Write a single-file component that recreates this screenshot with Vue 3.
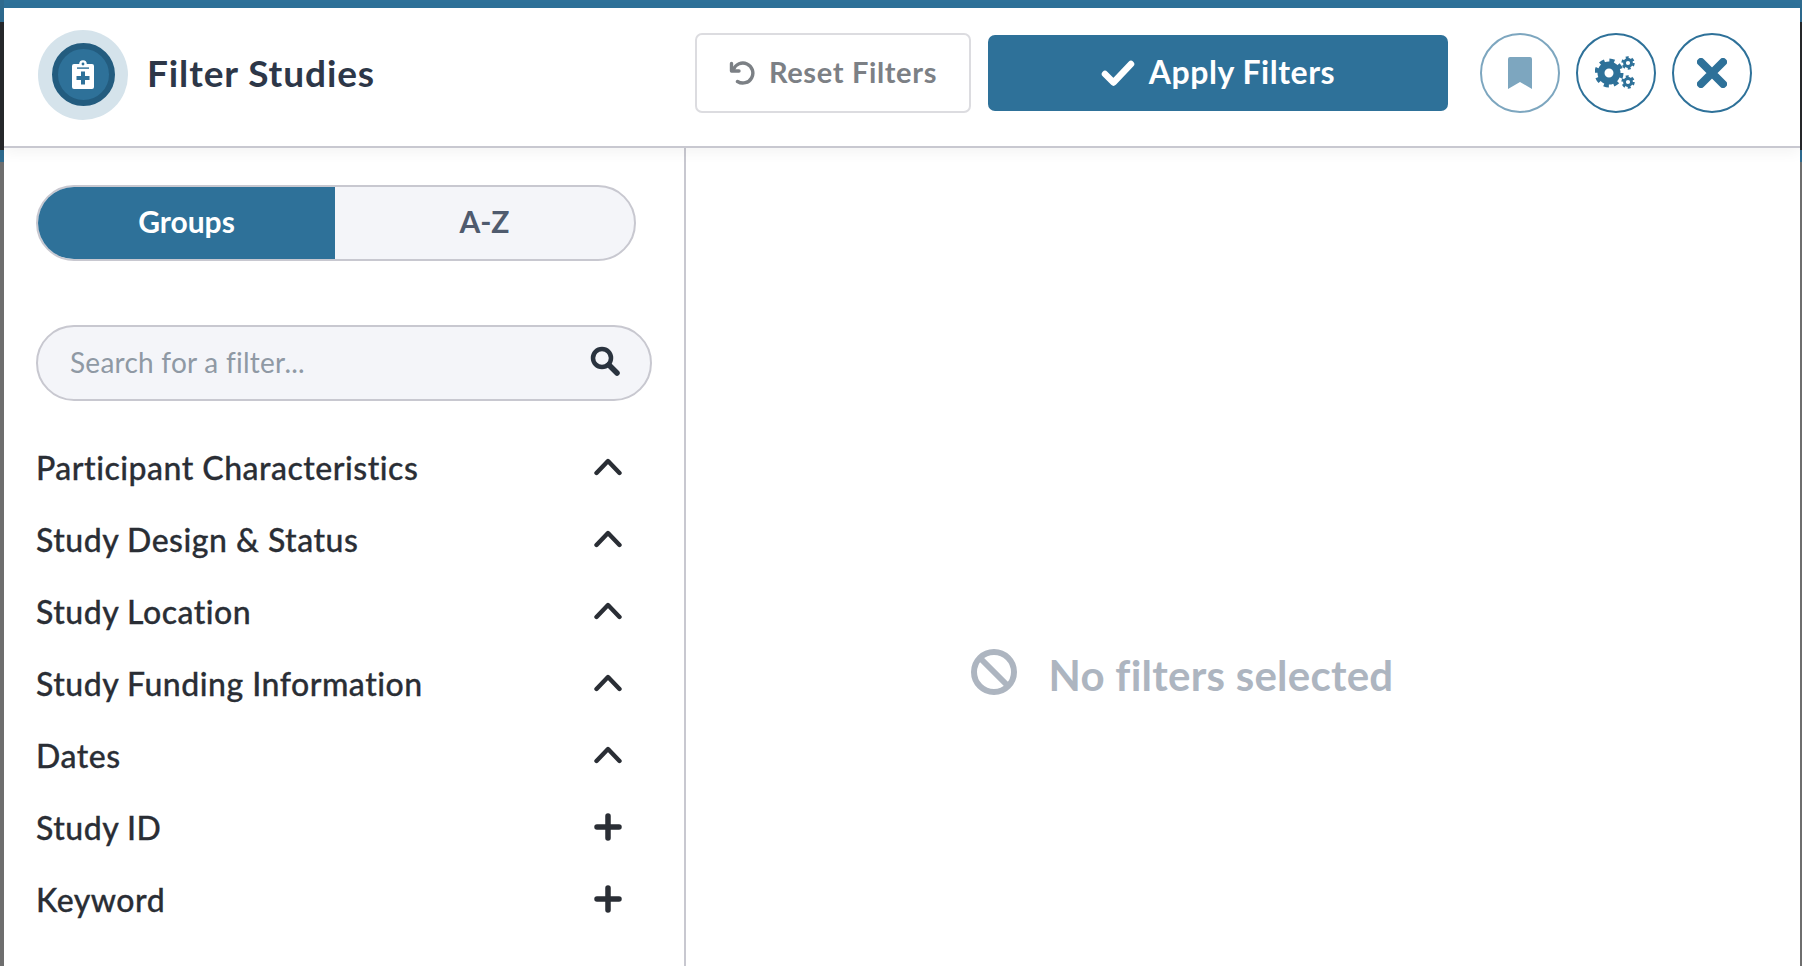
<script setup>
const rows = [
  { label: 'Participant Characteristics', open: true },
  { label: 'Study Design & Status', open: true },
  { label: 'Study Location', open: true },
  { label: 'Study Funding Information', open: true },
  { label: 'Dates', open: true },
  { label: 'Study ID', open: false },
  { label: 'Keyword', open: false },
]
</script>

<template>
  <div class="shell">
    <div class="panel">
      <header class="head">
        <div class="logo">
          <div class="logo-inner">
            <svg width="22" height="29" viewBox="0 0 22 29">
              <path fill="#fff" d="M2 4h5.200a3.800 3.800 0 0 1 7.600 0H20a2 2 0 0 1 2 2v21a2 2 0 0 1-2 2H2a2 2 0 0 1-2-2V6a2 2 0 0 1 2-2z" />
              <circle cx="11" cy="4" r="1.400" fill="#2e7199" />
              <rect x="5" y="7.400" width="12" height="1.400" fill="#2e7199" />
              <path fill="#2e7199" d="M9 11.500h4V16h4.500v4H13v4.500H9V20H4.500v-4H9z" />
            </svg>
          </div>
        </div>
        <h1 class="title">Filter Studies</h1>
        <button class="reset">
          <svg width="26" height="26" viewBox="0 0 26 26" fill="none" stroke="#7c8085" stroke-width="3.400">
            <path d="M4.500 9.500A10 10 0 1 1 8.500 21.500" stroke-linecap="round" />
            <path d="M2.500 3.500v7.500h7.500" stroke-linejoin="round" stroke-linecap="round" />
          </svg>
          <span>Reset Filters</span>
        </button>
        <button class="apply">
          <svg width="34" height="26" viewBox="0 0 34 26" fill="none" stroke="#fff" stroke-width="6.500" stroke-linecap="round" stroke-linejoin="round">
            <path d="M4 14l8.500 8.500L30 4" />
          </svg>
          <span>Apply Filters</span>
        </button>
        <button class="circle faded">
          <svg width="24" height="32" viewBox="0 0 24 32">
            <path fill="#2e7199" d="M2 0h20a2 2 0 0 1 2 2v30l-12-7-12 7V2a2 2 0 0 1 2-2z" />
          </svg>
        </button>
        <button class="circle">
          <svg width="42" height="34" viewBox="0 0 42 34">
            <g fill="none" stroke="#2e7199">
              <circle cx="14" cy="17" r="8" stroke-width="7" />
              <circle cx="14" cy="17" r="12.500" stroke-width="4" stroke-dasharray="5 4.820" />
              <circle cx="33" cy="7" r="3.500" stroke-width="2.800" />
              <circle cx="33" cy="7" r="5.500" stroke-width="2.400" stroke-dasharray="2.900 2.860" />
              <circle cx="33" cy="26" r="3.500" stroke-width="2.800" />
              <circle cx="33" cy="26" r="5.500" stroke-width="2.400" stroke-dasharray="2.900 2.860" />
            </g>
          </svg>
        </button>
        <button class="circle">
          <svg width="30" height="30" viewBox="0 0 30 30" fill="none" stroke="#2e7199" stroke-width="8" stroke-linecap="round">
            <path d="M4 4l22 22M26 4L4 26" />
          </svg>
        </button>
      </header>

      <div class="body">
        <aside class="side">
          <div class="toggle">
            <div class="tab active">Groups</div>
            <div class="tab">A-Z</div>
          </div>
          <div class="search">
            <span class="placeholder">Search for a filter...</span>
            <svg class="search-icon" width="30" height="30" viewBox="0 0 30 30" fill="none" stroke="#2a333f" stroke-linecap="round">
              <circle cx="12" cy="12" r="9" stroke-width="4.500" />
              <path d="M19 19l8 8" stroke-width="5.500" />
            </svg>
          </div>
          <ul class="list">
            <li v-for="r in rows" :key="r.label" class="row">
              <span>{{ r.label }}</span>
              <svg v-if="r.open" width="28" height="18" viewBox="0 0 28 18" fill="none" stroke="#2a2e35" stroke-width="4.400" stroke-linecap="round" stroke-linejoin="round">
                <path d="M2.500 15L14 3l11.500 12" />
              </svg>
              <svg v-else width="28" height="28" viewBox="0 0 28 28" fill="none" stroke="#2a2e35" stroke-width="5.500" stroke-linecap="round">
                <path d="M14 3v22M3 14h22" />
              </svg>
            </li>
          </ul>
        </aside>
        <main class="main">
          <div class="empty">
            <svg width="46" height="46" viewBox="0 0 46 46" fill="none" stroke="#adb5c0" stroke-width="6">
              <circle cx="23" cy="23" r="20" />
              <path d="M9 9l28 28" />
            </svg>
            <span class="empty-text">No filters selected</span>
          </div>
        </main>
      </div>
    </div>
  </div>
</template>

<style>
html, body { margin: 0; background: #26282b; }
</style>

<style scoped>
.shell {
  width: 1802px;
  height: 966px;
  overflow: hidden;
  background: linear-gradient(to bottom, #2e6a8e 0, #2e6a8e 22px, #26282b 22px, #26282b 150px, #2e6a8e 150px, #2e6a8e 162px, #6e6e6e 162px);
  font-family: Lato, "Noto Sans", sans-serif;
}
.panel {
  margin: 0 2px 0 4px;
  height: 966px;
  background: #fff;
  border-top: 8px solid #2e7199;
  box-sizing: border-box;
  display: flex;
  flex-direction: column;
}
.head {
  height: 140px;
  flex: none;
  box-sizing: border-box;
  border-bottom: 2px solid #c8c8d0;
  box-shadow: 0 4px 14px rgba(0, 0, 0, 0.05);
  position: relative;
  display: flex;
  align-items: center;
  padding: 0 0 8px 34px;
}
.logo {
  width: 90px;
  height: 90px;
  border-radius: 50%;
  background: #d5e3eb;
  display: flex;
  align-items: center;
  justify-content: center;
  flex: none;
  margin-top: 3px;
}
.logo-inner {
  width: 51px;
  height: 51px;
  border: 6px solid #235c7f;
  border-radius: 50%;
  background: #2e7199;
  display: flex;
  align-items: center;
  justify-content: center;
}
.title {
  margin: 0 0 0 19px;
  padding-bottom: 2px;
  font-size: 37px;
  font-weight: 700;
  letter-spacing: 0.9px;
  color: #2d3748;
  width: 548px;
  white-space: nowrap;
}
button {
  font-family: inherit;
  cursor: pointer;
  padding: 0;
}
.reset {
  width: 276px;
  height: 80px;
  box-sizing: border-box;
  border: 2px solid #dcdce0;
  border-radius: 7px;
  background: #fff;
  color: #7c8085;
  font-size: 29px;
  font-weight: 700;
  letter-spacing: 0.65px;
  display: flex;
  align-items: center;
  justify-content: center;
  gap: 14px;
}
.reset span, .apply span { padding-bottom: 3px; }
.apply {
  width: 460px;
  height: 76px;
  margin-left: 17px;
  border: 0;
  border-radius: 7px;
  background: #2e7199;
  color: #fff;
  font-size: 32px;
  font-weight: 700;
  letter-spacing: 0.55px;
  display: flex;
  align-items: center;
  justify-content: center;
  gap: 14px;
}
.circle {
  width: 80px;
  height: 80px;
  box-sizing: border-box;
  border: 2px solid #2e7199;
  border-radius: 50%;
  background: #fff;
  display: flex;
  align-items: center;
  justify-content: center;
  margin-left: 16px;
  flex: none;
}
.apply + .circle { margin-left: 32px; }
.faded { opacity: 0.62; }
.body {
  flex: 1;
  display: flex;
  min-height: 0;
}
.side {
  width: 682px;
  flex: none;
  box-sizing: border-box;
  border-right: 2px solid #c8c8d0;
  padding: 37px 0 0 32px;
}
.toggle {
  width: 600px;
  height: 76px;
  box-sizing: border-box;
  border: 2px solid #c8c8d0;
  border-radius: 38px;
  background: #f4f5f9;
  overflow: hidden;
  display: flex;
}
.tab {
  width: 297px;
  display: flex;
  align-items: center;
  justify-content: center;
  padding-bottom: 4px;
  box-sizing: border-box;
  font-size: 30px;
  font-weight: 700;
  color: #4f5b6e;
}
.tab + .tab { flex: 1; }
.tab.active {
  background: #2e7199;
  color: #fff;
}
.search {
  width: 616px;
  height: 76px;
  margin-top: 64px;
  box-sizing: border-box;
  border: 2px solid #c8c8d0;
  border-radius: 38px;
  background: #f4f5f9;
  display: flex;
  align-items: center;
  justify-content: space-between;
  padding: 0 30px 0 32px;
}
.search-icon { margin-bottom: 4px; }
.placeholder {
  font-size: 28px;
  letter-spacing: 0.25px;
  color: #8f99a4;
  padding-bottom: 2px;
}
.list {
  list-style: none;
  margin: 30px 0 0;
  padding: 0;
  width: 604px;
}
.row {
  height: 72px;
  display: flex;
  align-items: center;
  justify-content: space-between;
  font-size: 32px;
  font-weight: 500;
  letter-spacing: 0.5px;
  color: #2a2e35;
  -webkit-text-stroke: 0.3px #2a2e35;
}
.row svg { margin-right: 18px; }
.main {
  flex: 1;
  display: flex;
  justify-content: center;
  padding: 501px 122px 0 0;
}
.empty {
  display: flex;
  align-items: center;
  gap: 32px;
  height: 46px;
  color: #adb5c0;
  font-size: 42px;
  font-weight: 700;
  letter-spacing: 0.25px;
}
.empty-text { padding-top: 6px; }
</style>
